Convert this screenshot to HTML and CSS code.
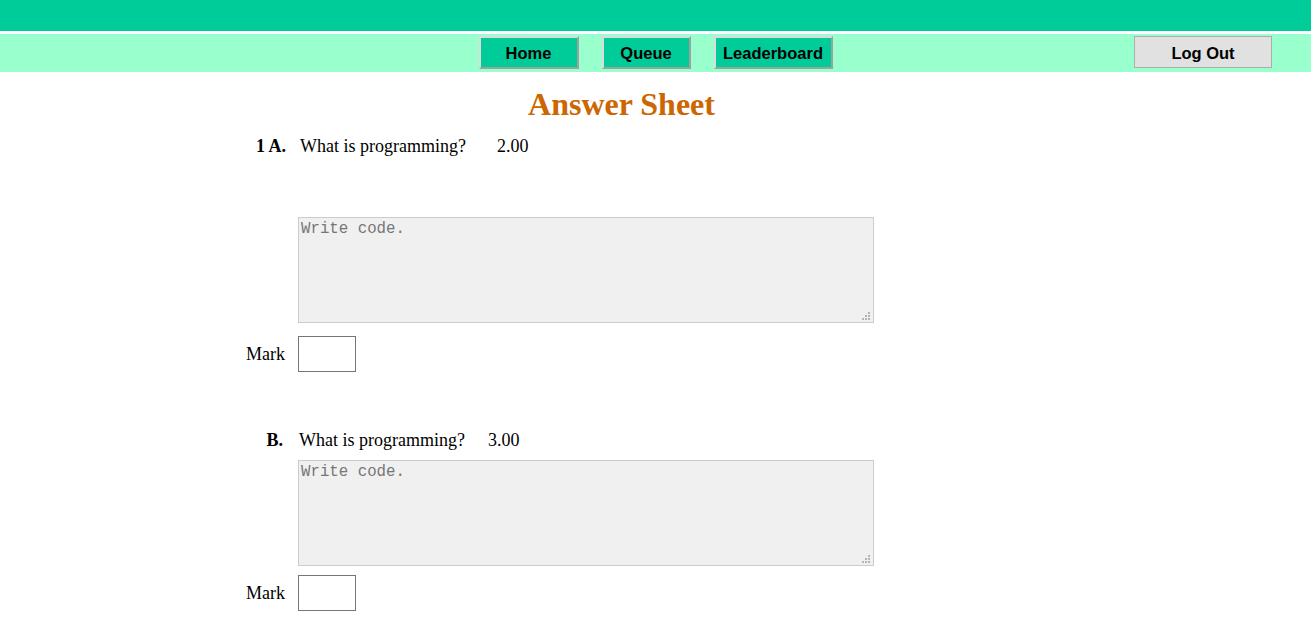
FILE: index.html
```html
<!DOCTYPE html>
<html>
<head>
<meta charset="utf-8">
<title>Answer Sheet</title>
<link rel="stylesheet" href="styles.css">
</head>
<body>
<header class="topbar"></header>
<nav class="navbar">
  <div class="nav-side"></div>
  <div class="nav-links">
    <a class="nav-btn btn-home" href="#">Home</a>
    <a class="nav-btn btn-queue" href="#">Queue</a>
    <a class="nav-btn btn-board" href="#">Leaderboard</a>
  </div>
  <div class="nav-side nav-right">
    <button class="logout" type="button">Log Out</button>
  </div>
</nav>
<main class="sheet">
  <h1 class="title">Answer Sheet</h1>

  <section class="question q1">
    <div class="qrow">
      <span class="qlabel">1 A.</span>
      <span class="qtext">What is programming?</span>
      <span class="qscore">2.00</span>
    </div>
    <div class="answer"><div class="field"><textarea class="code" placeholder="Write code."></textarea></div></div>
    <div class="mark">
      <label class="mlabel">Mark</label>
      <input class="minput" type="text">
    </div>
  </section>

  <section class="question q2">
    <div class="qrow">
      <span class="qlabel">B.</span>
      <span class="qtext">What is programming?</span>
      <span class="qscore">3.00</span>
    </div>
    <div class="answer"><div class="field"><textarea class="code" placeholder="Write code."></textarea></div></div>
    <div class="mark">
      <label class="mlabel">Mark</label>
      <input class="minput" type="text">
    </div>
  </section>
</main>
</body>
</html>
```

FILE: styles.css
```css
html, body {
  margin: 0;
  padding: 0;
  background: #ffffff;
}
body {
  font-family: "Liberation Serif", "Times New Roman", serif;
  color: #000;
}
.topbar {
  height: 31px;
  background: #00cc99;
}
.navbar {
  margin-top: 3px;
  height: 38px;
  background: #99ffcc;
  display: grid;
  grid-template-columns: 1fr auto 1fr;
  align-items: start;
}
.nav-links {
  display: flex;
  gap: 23px;
  padding-top: 2px;
}
.nav-btn {
  box-sizing: border-box;
  height: 33px;
  padding-top: 2px;
  display: flex;
  align-items: center;
  justify-content: center;
  background: #00cc99;
  border-style: solid;
  border-width: 2px;
  border-color: #dcdcdc #a0a0a0 #a0a0a0 #dcdcdc;
  color: #000;
  text-decoration: none;
  font-family: "Liberation Sans", Arial, sans-serif;
  font-weight: bold;
  font-size: 16.5px;
}
.btn-home { width: 100px; }
.btn-queue { width: 89px; }
.btn-board { width: 119px; }
.nav-right {
  display: flex;
  justify-content: flex-end;
  padding-top: 2px;
  padding-right: 39px;
}
.logout {
  box-sizing: border-box;
  width: 138px;
  height: 32px;
  background: #e1e1e1;
  border: 1px solid #adadad;
  font-family: "Liberation Sans", Arial, sans-serif;
  font-weight: bold;
  font-size: 16.5px;
  color: #000;
  padding: 2px 0 0 0;
}
.sheet {
  margin-left: 246px;
  width: 751px;
}
.title {
  margin: 14px 0 0 0;
  text-align: center;
  font-size: 32px;
  line-height: 36px;
  font-weight: bold;
  color: #cc6600;
}
.question {
  font-size: 18px;
  line-height: 20px;
}
.q1 { margin-top: 14px; }
.q2 { margin-top: 58px; }
.qrow {
  display: flex;
  align-items: baseline;
}
.qlabel {
  width: 40px;
  box-sizing: border-box;
  text-align: right;
  font-weight: bold;
}
.q1 .qtext { margin-left: 14px; }
.q1 .qscore { margin-left: 31px; }
.q2 .qlabel { padding-right: 3px; }
.q2 .qtext { margin-left: 13px; }
.q2 .qscore { margin-left: 23px; }
.answer {
  display: flex;
  padding-left: 52px;
}
.q1 .answer { margin-top: 61px; }
.q2 .answer { margin-top: 10px; }
.field {
  position: relative;
  width: 576px;
  height: 106px;
}
.field::after {
  content: "";
  position: absolute;
  right: 4px;
  bottom: 3px;
  width: 2px;
  height: 2px;
  background: #b4b4b4;
  box-shadow: -3px 0 #b4b4b4, -6px 0 #b4b4b4, 0 -3px #b4b4b4, -3px -3px #b4b4b4, 0 -6px #b4b4b4;
  pointer-events: none;
}
.code {
  display: block;
  box-sizing: border-box;
  width: 576px;
  height: 106px;
  margin: 0;
  padding: 2px;
  border: 1px solid #cccccc;
  background: #f0f0f0;
  font-family: "Liberation Mono", "Courier New", monospace;
  font-size: 15.75px;
  line-height: 18px;
  color: #000;
  resize: none;
}
.code::placeholder {
  color: #777777;
}
.mark {
  display: flex;
  align-items: center;
}
.q1 .mark { margin-top: 13px; }
.q2 .mark { margin-top: 9px; }
.mlabel {
  width: 40px;
  box-sizing: border-box;
  text-align: right;
  padding-right: 1px;
}
.minput {
  box-sizing: border-box;
  width: 58px;
  height: 36px;
  margin: 0 0 0 12px;
  border: 1px solid #767676;
  background: #fff;
  padding: 1px 2px;
}
```
